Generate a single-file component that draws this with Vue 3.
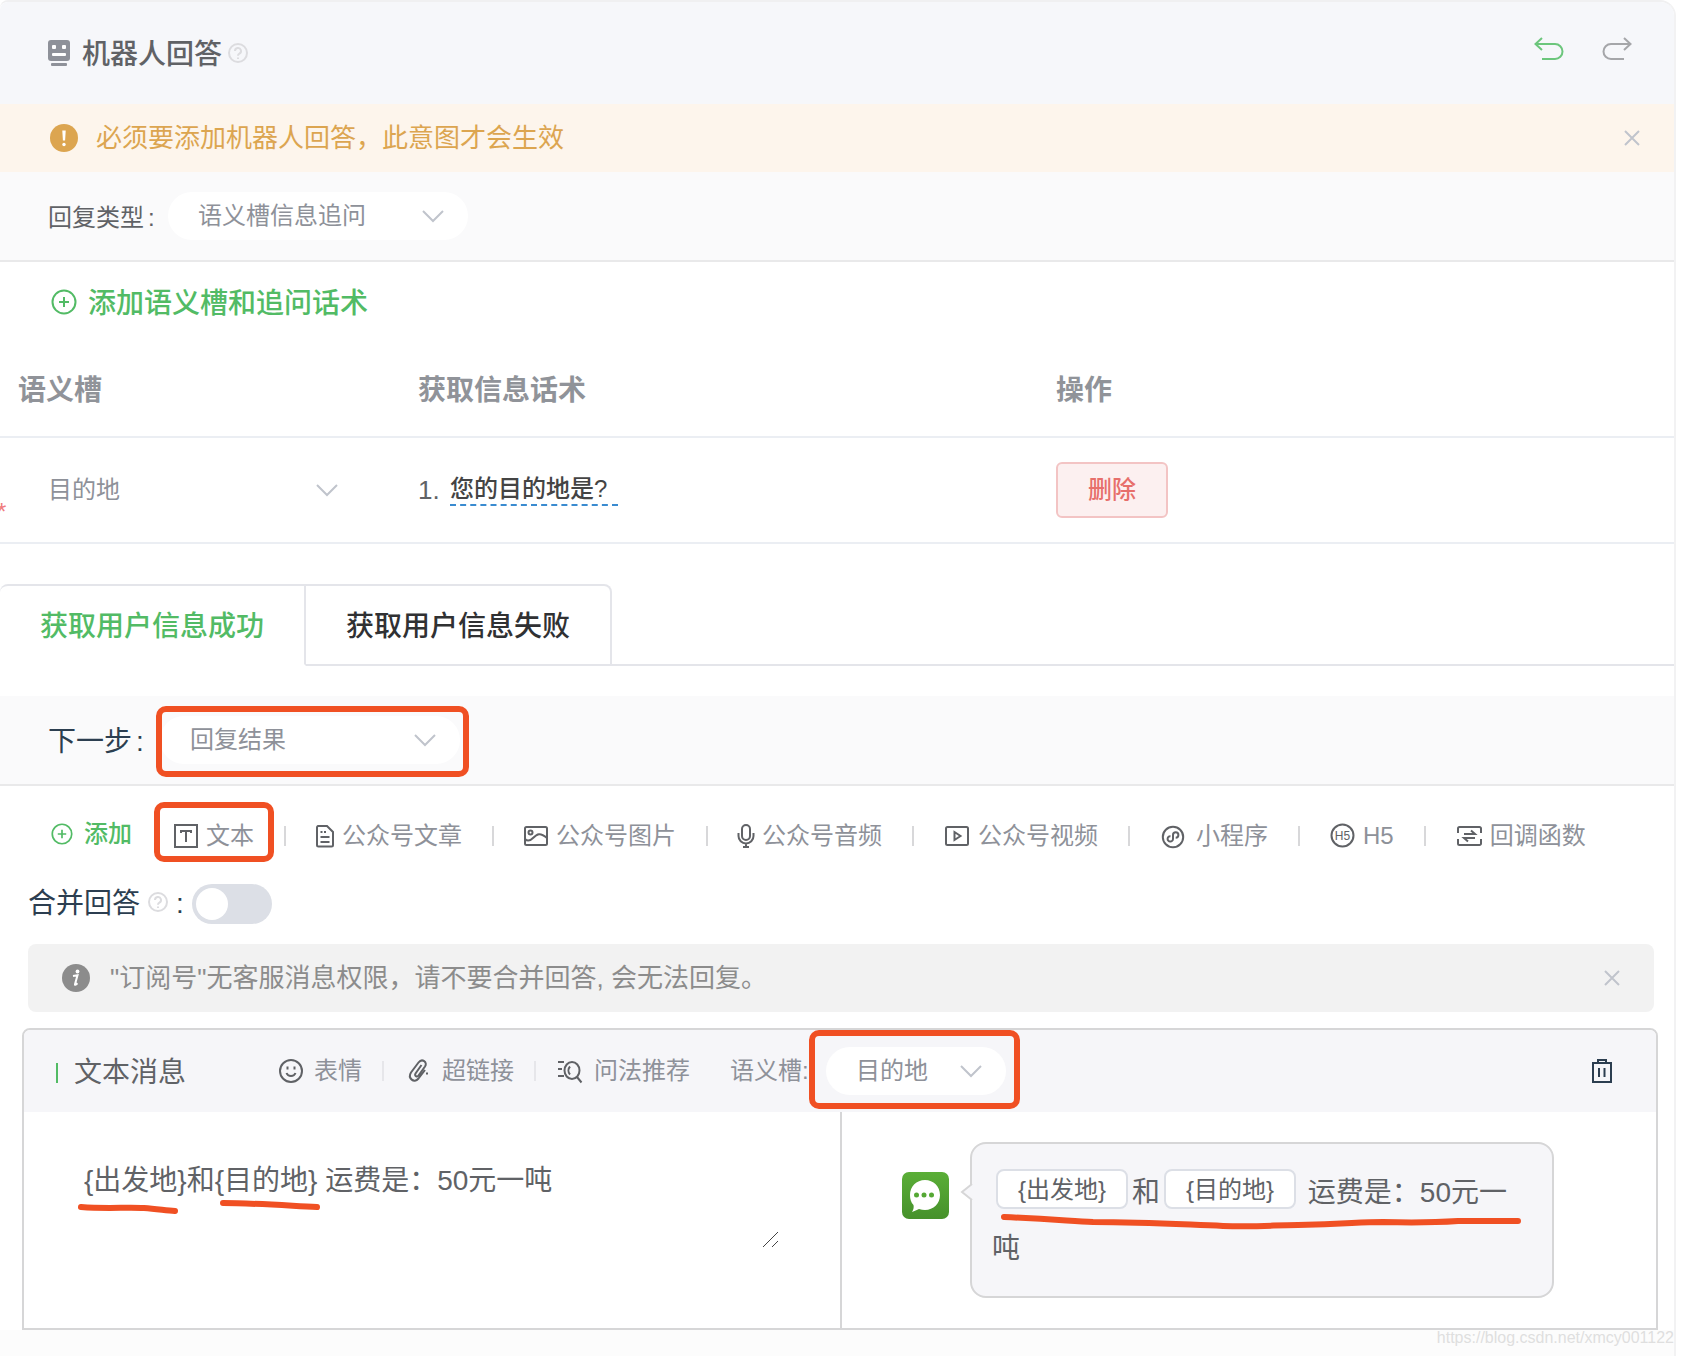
<script setup>
import { ref } from 'vue'

const tools = [
  { icon: 'text', label: '文本', box: '0 0 24 24', width: 24, marked: true },
  { icon: 'article', label: '公众号文章', box: '2 0 18 24', width: 18 },
  { icon: 'image', label: '公众号图片', box: '0 0 24 24', width: 24 },
  { icon: 'audio', label: '公众号音频', box: '2 0 16 24', width: 16 },
  { icon: 'video', label: '公众号视频', box: '0 0 26 24', width: 26 },
  { icon: 'mini', label: '小程序', box: '0 0 28 24', width: 28 },
  { icon: 'h5', label: 'H5', box: '0 0 25 24', width: 25 },
  { icon: 'callback', label: '回调函数', box: '0 0 26 24', width: 26 },
]

const tabs = ['获取用户信息成功', '获取用户信息失败']
const activeTab = ref(0)
const merged = ref(false)
const message = ref('{出发地}和{目的地} 运费是：50元一吨')
</script>

<template>
  <main class="panel">
    <header class="head">
      <svg class="robot" viewBox="0 0 22 26" width="22" height="26">
        <rect width="22" height="21" rx="3" fill="#8e9199" />
        <rect x="4" y="5" width="4" height="4" rx="1" fill="#fff" />
        <rect x="14" y="5" width="4" height="4" rx="1" fill="#fff" />
        <rect x="4" y="13" width="14" height="3" rx="1" fill="#fff" />
        <rect x="3" y="23" width="16" height="3" rx="1" fill="#8e9199" />
      </svg>
      <h1>机器人回答</h1>
      <svg class="help" viewBox="0 0 20 20" width="20" height="20">
        <circle cx="10" cy="10" r="9" />
        <path d="M7 8a3 3 0 1 1 4.400 2.600C10.300 11.200 10 11.600 10 12.800M10 14.500v1.500" />
      </svg>
      <div class="history">
        <button type="button" class="undo" aria-label="撤销">
          <svg viewBox="0 0 30 24" width="30" height="24"><path d="M8 1L1.500 7 8 13M1.500 7H21a7.500 7.500 0 0 1 0 15H8" /></svg>
        </button>
        <button type="button" class="redo" aria-label="重做">
          <svg viewBox="0 0 30 24" width="30" height="24"><path d="M22 1l6.500 6L22 13M28.500 7H9a7.500 7.500 0 0 0 0 15H22" /></svg>
        </button>
      </div>
    </header>

    <div class="alert warning" role="alert">
      <svg viewBox="0 0 28 28" width="28" height="28">
        <circle cx="14" cy="14" r="14" fill="#dca550" />
        <path d="M12.300 6.500h3.400l-.6 10h-2.200z" fill="#fff" />
        <circle cx="14" cy="20.500" r="1.700" fill="#fff" />
      </svg>
      <span>必须要添加机器人回答，此意图才会生效</span>
      <button type="button" class="close" aria-label="关闭">
        <svg viewBox="0 0 16 16" width="16" height="16"><path d="M1 1l14 14M15 1L1 15" /></svg>
      </button>
    </div>

    <div class="row">
      <label for="reply-type" class="type-label">回复类型<span>:</span></label>
      <div class="select wide">
        <select id="reply-type"><option>语义槽信息追问</option></select>
        <svg viewBox="0 0 22 12" width="22" height="12"><path d="M1 1l10 10L21 1" /></svg>
      </div>
    </div>

    <button type="button" class="add-slot">
      <svg viewBox="0 0 26 26" width="26" height="26"><circle cx="13" cy="13" r="11.500" /><path d="M8 13h10M13 8v10" /></svg>
      <span>添加语义槽和追问话术</span>
    </button>

    <table class="slots">
      <colgroup><col class="c1" /><col class="c2" /><col /></colgroup>
      <thead>
        <tr><th>语义槽</th><th>获取信息话术</th><th>操作</th></tr>
      </thead>
      <tbody>
        <tr>
          <td>
            <span class="required">*</span>
            <div class="select plain">
              <select aria-label="语义槽"><option>目的地</option></select>
              <svg viewBox="0 0 22 12" width="22" height="12"><path d="M1 1l10 10L21 1" /></svg>
            </div>
          </td>
          <td><div class="ask"><span class="num">1.</span><a href="#">您的目的地是?</a></div></td>
          <td><button type="button" class="delete">删除</button></td>
        </tr>
      </tbody>
    </table>

    <div class="tabs" role="tablist">
      <button
        v-for="(tab, i) in tabs"
        :key="tab"
        type="button"
        role="tab"
        :aria-selected="activeTab === i"
        :class="{ active: activeTab === i }"
        @click="activeTab = i"
      >{{ tab }}</button>
      <div class="tab-rest"></div>
    </div>

    <div class="row next">
      <label for="next-step" class="next-label">下一步<span>:</span></label>
      <div class="select wide">
        <select id="next-step"><option>回复结果</option></select>
        <svg viewBox="0 0 22 12" width="22" height="12"><path d="M1 1l10 10L21 1" /></svg>
        <span class="mark mark-next"></span>
      </div>
    </div>

    <div class="toolbar">
      <button type="button" class="add">
        <svg viewBox="0 0 26 26" width="22" height="22"><circle cx="13" cy="13" r="11.500" /><path d="M8 13h10M13 8v10" /></svg>
        添加
      </button>
      <button v-for="tool in tools" :key="tool.icon" type="button" class="tool">
        <svg :viewBox="tool.box" :width="tool.width" height="24">
          <template v-if="tool.icon === 'text'">
            <rect x="1" y="1" width="22" height="22" />
            <path d="M7 9V7h10v2M12 7v11" />
          </template>
          <template v-else-if="tool.icon === 'article'">
            <path d="M4 2h9l6 6v13a1.500 1.500 0 0 1-1.500 1.500h-13A1.500 1.500 0 0 1 3 21V3.500A1.500 1.500 0 0 1 4 2zM6.500 8h2M10 8h2M6.500 13h9M6.500 18h9" />
          </template>
          <template v-else-if="tool.icon === 'image'">
            <rect x="1" y="3" width="22" height="18" rx="1.500" />
            <circle cx="6.500" cy="8.500" r="2" />
            <path d="M1 15c2 2 5 2 8-1 4-4 7-6 14 0" />
          </template>
          <template v-else-if="tool.icon === 'audio'">
            <rect x="6" y="1" width="8" height="15" rx="4" />
            <path d="M2.500 9v3a7.500 7.500 0 0 0 15 0V9M10 19.500V23M7 23h6" />
          </template>
          <template v-else-if="tool.icon === 'video'">
            <rect x="2" y="3" width="22" height="18" rx="1.500" />
            <path d="M10.500 8v8l6-4z" />
          </template>
          <template v-else-if="tool.icon === 'mini'">
            <circle cx="13" cy="13" r="10.200" />
            <path d="M10.500 12.200a2.700 2.700 0 1 0 2.500 2.800V11a2.700 2.700 0 1 1 2.700 2.700" />
          </template>
          <template v-else-if="tool.icon === 'h5'">
            <circle cx="12.500" cy="11.500" r="11" />
            <text x="12.500" y="16">H5</text>
          </template>
          <template v-else>
            <path d="M2 9V4.500A1.500 1.500 0 0 1 3.500 3h20A1.500 1.500 0 0 1 25 4.500V9M2 15v4.500A1.500 1.500 0 0 0 3.500 21h20a1.500 1.500 0 0 0 1.500-1.500V15M8 10h11l-4-3.500M19 14H8l4 3.500" />
          </template>
        </svg>
        {{ tool.label }}
        <span v-if="tool.marked" class="mark mark-text"></span>
      </button>
    </div>

    <div class="merge">
      <label for="merge">合并回答</label>
      <svg class="help" viewBox="0 0 20 20" width="20" height="20">
        <circle cx="10" cy="10" r="9" />
        <path d="M7 8a3 3 0 1 1 4.400 2.600C10.300 11.200 10 11.600 10 12.800M10 14.500v1.500" />
      </svg>
      <span class="colon">:</span>
      <input id="merge" v-model="merged" type="checkbox" role="switch" class="switch" />
    </div>

    <div class="alert info">
      <svg viewBox="0 0 28 28" width="28" height="28">
        <circle cx="14" cy="14" r="14" fill="#8c8c8c" />
        <circle cx="15.500" cy="7.500" r="1.900" fill="#fff" />
        <path d="M11 12l4.500-.8-2.500 9c-.2.800.3.900 2.500-1" fill="none" stroke="#fff" stroke-width="2" />
      </svg>
      <span>"订阅号"无客服消息权限，请不要合并回答, 会无法回复。</span>
      <button type="button" class="close" aria-label="关闭">
        <svg viewBox="0 0 16 16" width="16" height="16"><path d="M1 1l14 14M15 1L1 15" /></svg>
      </button>
    </div>

    <section class="card">
      <div class="card-head">
        <h2>文本消息</h2>
        <button type="button" class="act">
          <svg viewBox="0 0 26 26" width="26" height="26"><circle cx="13" cy="13" r="11" /><path d="M9.500 8.500v3M16.500 8.500v3M8.500 15c1.500 4 7.500 4 9 0" /></svg>
          表情
        </button>
        <button type="button" class="act">
          <svg viewBox="0 0 26 26" width="26" height="26"><path d="M15.500 7l-6 8.500c-1.500 2.300 1.500 4 3 2l6.500-9C22 4 16 0 12.500 4.500L5 14.500C1.500 20 8 26 12.500 20.500L19 12M20 15.500h2" /></svg>
          超链接
        </button>
        <button type="button" class="act">
          <svg viewBox="2 0 26 26" width="26" height="26"><path d="M2 4h6M2 11h4M2 18h6M21 19l4.500 5.500M14 8.500a6 6 0 0 0 0 8" /><ellipse cx="16" cy="12.500" rx="7.500" ry="8.500" /></svg>
          问法推荐
        </button>
        <label for="slot" class="slot-label">语义槽:</label>
        <div class="select small">
          <select id="slot"><option>目的地</option></select>
          <svg viewBox="0 0 22 12" width="22" height="12"><path d="M1 1l10 10L21 1" /></svg>
          <span class="mark mark-slot"></span>
        </div>
        <button type="button" class="trash" aria-label="删除消息">
          <svg viewBox="0 0 24 26" width="24" height="26"><path d="M2 5h20M8 5V2h8v3M3 5v19h18V5M9 10v9M14.500 10v9" /></svg>
        </button>
      </div>
      <div class="card-body">
        <div class="editor">
          <textarea v-model="message" aria-label="文本消息" rows="2"></textarea>
          <svg class="grip" viewBox="0 0 16 16" width="16" height="16"><path d="M0 15L15 0M9 15l6-6" /></svg>
          <svg class="stroke stroke-edit" viewBox="0 0 244 20" width="244" height="20">
            <path d="M3 10C29 12 49 10 66 11c12 1 20 2 31 3M145 6c25 0 55 2 94 4" />
          </svg>
        </div>
        <div class="preview">
          <svg class="avatar" viewBox="0 0 47 47" width="47" height="47">
            <defs>
              <linearGradient id="leaf" x1="0" y1="0" x2="0" y2="1">
                <stop offset="0" stop-color="#5aae37" /><stop offset="1" stop-color="#46912b" />
              </linearGradient>
            </defs>
            <rect width="47" height="47" rx="7" fill="url(#leaf)" />
            <path d="M23 8c8.500 0 15 6.500 15 15s-6.500 15-15 15c-2 0-4-.3-6-1-2 1-4.500 2-7 3 1.500-2.500 2-4.500 1.500-7C9 30.500 8 27 8 23 8 14.500 14.500 8 23 8z" fill="#fff" />
            <g fill="#55a834"><circle cx="14.500" cy="23" r="2.500" /><circle cx="22" cy="23" r="2.500" /><circle cx="29.500" cy="23" r="2.500" /></g>
          </svg>
          <div class="bubble">
            <svg class="tail" viewBox="0 0 12 18" width="12" height="18"><path d="M12 1L2 9l10 8" /></svg>
            <span class="chip">{出发地}</span>和<span class="chip">{目的地}</span> 运费是：50元一吨
            <svg class="stroke stroke-bubble" viewBox="0 0 522 20" width="522" height="20">
              <path d="M3 5C50 7 70 9 92 10c50 0 80 2 130 4 40 1 50-1 75-1 50-1 60-3 85-3 35 1 60 0 75-1h60" />
            </svg>
          </div>
        </div>
      </div>
    </section>

    <footer>https://blog.csdn.net/xmcy001122</footer>
  </main>
</template>

<style>
body {
  background: #fff;
}
</style>

<style scoped>
* {
  box-sizing: border-box;
}
.panel {
  margin-right: 6px;
  border-top: 2px solid #f0f0f1;
  border-right: 2px solid #f2f2f3;
  border-radius: 8px 16px 0 0;
  background: #fff;
  color: #606266;
  font-family: "Liberation Sans", "Noto Sans CJK SC", sans-serif;
  font-size: 24px;
  line-height: 36px;
}
button,
select,
textarea {
  margin: 0;
  padding: 0;
  border: 0;
  background: none;
  color: inherit;
  font: inherit;
}
svg {
  flex: none;
  overflow: visible;
  fill: none;
  stroke-width: 2;
}
h1,
h2 {
  margin: 0;
  padding-top: 3px;
  font-size: 28px;
  font-weight: 500;
}
.head {
  display: flex;
  align-items: center;
  height: 102px;
  padding: 0 42px 0 48px;
  border-radius: 8px 14px 0 0;
  background: #f6f7fa;
}
.robot {
  margin-right: 12px;
}
.help {
  margin-left: 6px;
  stroke: #dcdcdf;
}
.history {
  display: flex;
  gap: 38px;
  margin: 0 0 8px auto;
}
.history button {
  display: flex;
}
.undo {
  stroke: #6cc67c;
}
.redo {
  stroke: #a5a6a9;
}
.alert {
  display: flex;
  align-items: center;
  height: 68px;
  font-size: 26px;
}
.alert span {
  margin-left: 18px;
}
.warning {
  padding: 0 34px 0 50px;
  background: #fdf5ec;
  color: #dca550;
}
.info {
  margin: 20px 20px 16px 28px;
  padding: 0 34px;
  border-radius: 8px;
  background: #f2f2f2;
  color: #8c8c8c;
}
.info span {
  margin-left: 20px;
}
.close {
  display: flex;
  margin-left: auto;
  stroke: #c0c4cc;
}
.row {
  display: flex;
  align-items: center;
  height: 90px;
  padding-left: 48px;
  border-bottom: 2px solid #e9e9ea;
  background: #fafafb;
}
.row label {
  padding-top: 3px;
}
.row label span {
  margin-left: 4px;
}
.type-label {
  width: 120px;
}
.next-label {
  width: 112px;
  color: #2c3e50;
  font-size: 28px;
}
.select {
  position: relative;
  display: flex;
  align-items: center;
  height: 48px;
  border-radius: 24px;
  background: #fff;
  color: #8e9199;
}
.select select {
  width: 100%;
  height: 48px;
  padding: 0 60px 0 30px;
  appearance: none;
}
.select svg {
  position: absolute;
  right: 24px;
  stroke: #c0c4cc;
  pointer-events: none;
}
.wide {
  width: 300px;
}
.small {
  width: 180px;
}
.plain {
  width: 344px;
}
.mark {
  position: absolute;
  border: 6px solid #f05023;
  border-radius: 10px;
  pointer-events: none;
}
.mark-next {
  inset: -10px -9px -13px -4px;
}
.mark-text {
  inset: -14px -20px -8px -20px;
}
.mark-slot {
  inset: -17px -14px -14px -17px;
}
.add-slot,
.add {
  display: flex;
  align-items: center;
  color: #52bb65;
  font-weight: 500;
  stroke: #52bb65;
}
.add-slot {
  gap: 11px;
  height: 80px;
  padding-left: 51px;
  font-size: 28px;
}
.add-slot span {
  padding-top: 3px;
}
.slots {
  width: 100%;
  border-collapse: collapse;
  table-layout: fixed;
}
.c1 {
  width: 400px;
}
.c2 {
  width: 638px;
}
.slots th,
.slots td {
  position: relative;
  padding: 0 0 0 18px;
  border-bottom: 2px solid #ebeef3;
  text-align: left;
}
.slots th {
  height: 95px;
  padding-top: 4px;
  color: #909399;
  font-size: 28px;
  font-weight: 700;
}
.slots td {
  height: 106px;
}
.required {
  position: absolute;
  bottom: 12px;
  left: -3px;
  color: #f07c7c;
}
.ask {
  display: flex;
  align-items: center;
}
.num {
  width: 32px;
  font-size: 26px;
}
.ask a {
  padding-right: 11px;
  border-bottom: 2px dashed #3a8bd0;
  color: #444;
  font-weight: 500;
  line-height: 30px;
  text-decoration: none;
}
.delete {
  width: 112px;
  height: 56px;
  border: 2px solid #f3c4c4;
  border-radius: 6px;
  background: #fcf0f0;
  color: #e76f6b;
  font-weight: 500;
}
.tabs {
  display: flex;
  height: 82px;
  margin: 40px 0 30px;
}
.tabs button {
  width: 306px;
  padding-top: 4px;
  border: solid #e4e5ea;
  border-width: 2px 2px 2px 0;
  color: #303133;
  font-size: 28px;
  font-weight: 500;
}
.tabs button:first-child {
  border-radius: 8px 0 0 0;
}
.tabs button:nth-child(2) {
  border-radius: 0 8px 0 0;
}
.tabs .active {
  border-bottom-color: #fff;
  color: #52bb65;
}
.tab-rest {
  flex: 1;
  border-bottom: 2px solid #e4e5ea;
}
.toolbar {
  display: flex;
  align-items: center;
  height: 98px;
  padding-left: 51px;
}
.add {
  gap: 11px;
  margin: 0 42px 2px 0;
}
.tool {
  position: relative;
  display: flex;
  align-items: center;
  gap: 8px;
  padding-top: 2px;
  color: #8e9199;
  stroke: #606266;
}
.tool + .tool {
  margin-left: 62px;
}
.tool + .tool::before {
  position: absolute;
  left: -32px;
  width: 2px;
  height: 20px;
  background: #d8d8da;
  content: "";
}
.tool text {
  fill: #606266;
  font-size: 12px;
  stroke: none;
  text-anchor: middle;
}
.merge {
  display: flex;
  align-items: center;
  height: 40px;
  padding-left: 28px;
  color: #2c3e50;
  font-size: 28px;
}
.merge .help {
  margin: 0 0 4px 8px;
}
.colon {
  width: 24px;
  padding-left: 8px;
}
.switch {
  width: 80px;
  height: 40px;
  margin: 0;
  padding: 4px;
  border-radius: 20px;
  background: #dcdfe6;
  appearance: none;
}
.switch::before {
  display: block;
  width: 32px;
  height: 32px;
  border-radius: 16px;
  background: #fff;
  content: "";
}
.switch:checked {
  padding-left: 44px;
  background: #52bb65;
}
.card {
  margin: 0 16px 0 22px;
  border: 2px solid #d6d6d7;
  border-radius: 8px 8px 0 0;
}
.card-head {
  display: flex;
  align-items: center;
  height: 82px;
  padding: 0 42px 0 32px;
  border-radius: 6px 6px 0 0;
  background: #f6f6f9;
}
.card-head h2 {
  display: flex;
  align-items: center;
  gap: 16px;
  margin-right: 92px;
  font-weight: 400;
}
.card-head h2::before {
  width: 2px;
  height: 20px;
  background: #52bb65;
  content: "";
}
.act {
  position: relative;
  display: flex;
  align-items: center;
  gap: 10px;
  color: #8e9199;
  stroke: #606266;
}
.act + .act {
  margin-left: 44px;
}
.act + .act::before {
  position: absolute;
  left: -24px;
  width: 2px;
  height: 20px;
  background: #e6e6ea;
  content: "";
}
.slot-label {
  width: 96px;
  margin-left: 40px;
  color: #8e9199;
}
.trash {
  display: flex;
  margin-left: auto;
  stroke: #2c3e50;
}
.card-body {
  display: flex;
  height: 216px;
}
.editor {
  position: relative;
  width: 818px;
  padding: 41px 60px;
  border-right: 2px solid #d6d6d7;
}
.editor textarea {
  width: 100%;
  height: 96px;
  line-height: 56px;
  font-size: 28px;
  outline: 0;
  resize: none;
  overflow: hidden;
}
.grip {
  position: absolute;
  top: 120px;
  right: 61px;
  stroke: #444;
}
.grip path {
  stroke-width: 1;
}
.stroke {
  position: absolute;
  stroke: #f05023;
  stroke-width: 6;
  stroke-linecap: round;
  stroke-linejoin: round;
  pointer-events: none;
}
.stroke-edit {
  top: 85px;
  left: 54px;
}
.preview {
  display: flex;
  flex: 1;
  align-items: flex-start;
  padding: 30px 102px 0 60px;
}
.avatar {
  margin: 30px 21px 0 0;
}
.bubble {
  position: relative;
  flex: 1;
  height: 156px;
  padding: 21px 24px 0 20px;
  border: 2px solid #d6d6d7;
  border-radius: 16px;
  background: #f6f6f9;
  font-size: 28px;
  line-height: 56px;
}
.tail {
  position: absolute;
  top: 39px;
  left: -12px;
  fill: #f6f6f9;
  stroke: #d6d6d7;
}
.chip {
  display: inline-block;
  margin: 0 4px;
  padding: 2px 20px 0;
  border: 2px solid #dcdfe6;
  border-radius: 8px;
  background: #fff;
  font-size: 24px;
  line-height: 34px;
  vertical-align: 4px;
}
.stroke-bubble {
  top: 68px;
  left: 29px;
}
footer {
  height: 26px;
  background: #fcfcfc;
  color: #dfdfdf;
  font-size: 16px;
  line-height: 16px;
  text-align: right;
}
</style>
